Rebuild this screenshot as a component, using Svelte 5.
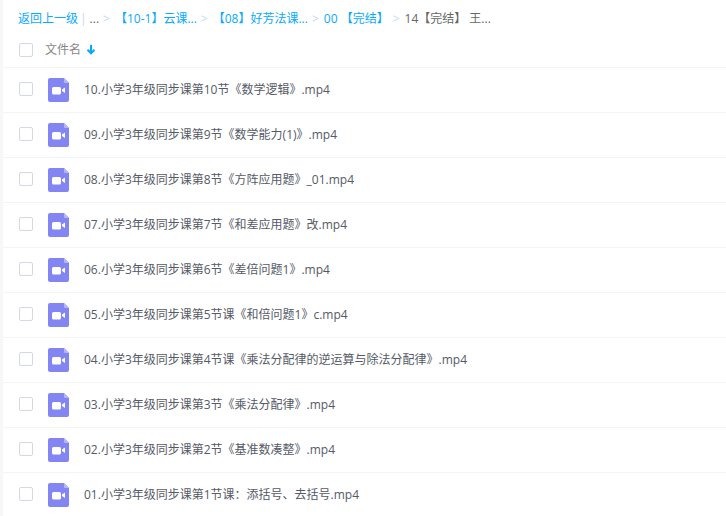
<script>
    const crumbs = [
        "【10-1】云课...",
        "【08】好芳法课...",
        "00 【完结】"
    ];

    const files = [
        "10.小学3年级同步课第10节《数学逻辑》.mp4",
        "09.小学3年级同步课第9节《数学能力(1)》.mp4",
        "08.小学3年级同步课第8节《方阵应用题》_01.mp4",
        "07.小学3年级同步课第7节《和差应用题》改.mp4",
        "06.小学3年级同步课第6节《差倍问题1》.mp4",
        "05.小学3年级同步课第5节课《和倍问题1》c.mp4",
        "04.小学3年级同步课第4节课《乘法分配律的逆运算与除法分配律》.mp4",
        "03.小学3年级同步课第3节《乘法分配律》.mp4",
        "02.小学3年级同步课第2节《基准数凑整》.mp4",
        "01.小学3年级同步课第1节课：添括号、去括号.mp4"
    ];
</script>

<div class="page">
    <nav class="crumbs">
        <span class="link">返回上一级</span>
        <span class="bar">|</span>
        <span class="dots">...</span>
        <span class="sep">&gt;</span>
        {#each crumbs as c}
            <span class="link">{c}</span>
            <span class="sep">&gt;</span>
        {/each}
        <span class="current">14【完结】 王...</span>
    </nav>

    <div class="head">
        <span class="check"></span>
        <span class="name">文件名</span>
        <svg class="arrow" width="10" height="11" viewBox="0 0 10 11">
            <path d="M5 1v8M1.500 5.800 5 9.300l3.500-3.500" fill="none" stroke="#06a7ff" stroke-width="2" />
        </svg>
    </div>

    {#each files as file}
        <div class="row">
            <span class="check"></span>
            <svg class="icon" width="21" height="24" viewBox="0 0 21 24">
                <path d="M2 0h14l5 5v17a2 2 0 0 1-2 2H2a2 2 0 0 1-2-2V2a2 2 0 0 1 2-2z" fill="#8385f2" />
                <path d="M16 0l5 5h-4a1 1 0 0 1-1-1z" fill="#b5b6f7" />
                <rect x="4" y="9" width="9" height="7.500" rx="1.500" fill="#fff" />
                <path d="M14 11.600 17 9.600v5.300l-3-2z" fill="#fff" />
            </svg>
            <span class="file">{file}</span>
        </div>
    {/each}
</div>

<style>
    :global(body) {
        margin: 0;
        background: #fff;
    }

    .page {
        width: 726px;
        height: 516px;
        overflow: hidden;
        box-sizing: border-box;
        padding-left: 3px;
        background: #fff;
        font-family: "Open Sans", "Noto Sans CJK SC", sans-serif;
        font-size: 12px;
        color: #666;
        box-shadow: inset 3px 0 0 #f7f7f8;
    }

    .crumbs {
        display: flex;
        align-items: center;
        height: 36px;
        padding-left: 15px;
        white-space: pre;
    }

    .link {
        color: #09aaff;
    }

    .bar {
        color: #c4d8f4;
        margin: 0 3px 0 2px;
    }

    .dots,
    .current {
        color: #666;
    }

    .sep {
        color: #c4d8f4;
        margin: 0 5px 0 4px;
    }

    .head {
        display: flex;
        align-items: center;
        height: 31px;
        border-bottom: 1px solid #f4f4f5;
    }

    .head .check {
        margin-bottom: 3px;
    }

    .row {
        display: flex;
        align-items: center;
        height: 44px;
        border-bottom: 1px solid #f4f4f5;
    }

    .row .check,
    .file {
        margin-bottom: 2px;
    }

    .check {
        width: 12px;
        height: 12px;
        margin-left: 16px;
        border: 1px solid #d4d7e4;
        border-radius: 2px;
        flex: none;
    }

    .name {
        margin-left: 12px;
        margin-bottom: 6px;
        color: #888;
    }

    .arrow {
        margin-left: 5px;
        margin-bottom: 4px;
    }

    .icon {
        margin-left: 15px;
        flex: none;
    }

    .file {
        margin-left: 15px;
        color: #555a66;
        white-space: nowrap;
    }
</style>
